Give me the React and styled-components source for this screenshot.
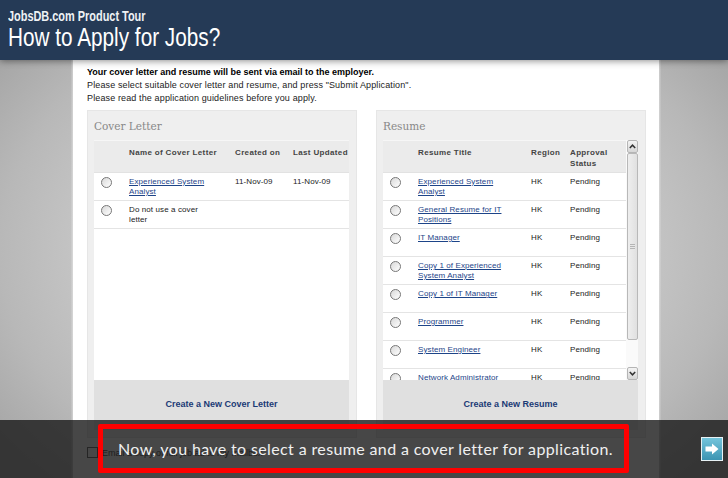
import React from 'react';
import styled, { createGlobalStyle } from 'styled-components';

const GlobalStyle = createGlobalStyle`
  html, body {
    margin: 0;
    padding: 0;
    background: #b5b5b5;
  }
`;

const Stage = styled.div`
  position: relative;
  width: 728px;
  height: 478px;
  overflow: hidden;
  display: flex;
  flex-direction: column;
  font-family: 'Liberation Sans', Arial, sans-serif;
  background: radial-gradient(ellipse 400px 290px at 364px 250px, #c8c8c8 0%, #c5c5c5 70%, #b8b8b8 91%, #a6a6a6 112%, #a0a0a0 130%);
`;

const Header = styled.header`
  flex: none;
  height: 60px;
  box-sizing: border-box;
  padding: 8px 0 0 8px;
  background: #253a56;
  color: #fff;
  position: relative;
  z-index: 1;
  box-shadow: 0 1px 7px rgba(0, 0, 0, 0.45);
`;

const TourName = styled.div`
  font-size: 14px;
  line-height: 16px;
  font-weight: 700;
  color: #eef1f4;
  transform: scaleX(0.78);
  transform-origin: left;
`;

const TourTitle = styled.div`
  font-size: 25px;
  line-height: 27px;
  transform: scaleX(0.83);
  transform-origin: left;
`;

const Page = styled.main`
  flex: 1;
  width: 586px;
  margin-left: 73px;
  box-sizing: border-box;
  padding: 6px 13px 0 14px;
  background: #fff;
  box-shadow: 0 0 0 1.5px rgba(255, 255, 255, 0.3);
`;

const Intro = styled.p`
  margin: 0 0 5px;
  font-size: 9px;
  line-height: 13px;
  color: #222;
  letter-spacing: 0.13px;
  ${(p) => p.$strong && 'font-weight: 700; letter-spacing: 0; color: #000; margin-bottom: 0;'}
  ${(p) => p.$tight && 'margin-bottom: 0;'}
`;

const Panels = styled.div`
  display: flex;
  justify-content: space-between;
`;

const Panel = styled.section`
  width: 270px;
  height: 328px;
  box-sizing: border-box;
  padding: 0 7px 0 6px;
  background: #efefef;
  border: 1px solid #e6e6e6;
  display: flex;
  flex-direction: column;
`;

const PanelTitle = styled.h2`
  margin: 0;
  height: 29px;
  line-height: 30px;
  font-family: 'DejaVu Serif', 'Liberation Serif', serif;
  font-size: 10.5px;
  font-weight: 400;
  color: #888;
  flex: none;
`;

const ListArea = styled.div`
  flex: none;
  height: 240px;
  display: flex;
`;

const Table = styled.div`
  flex: 1;
  min-width: 0;
  overflow: hidden;
  background: #fff;
`;

const HeadRow = styled.div`
  height: 33px;
  box-sizing: border-box;
  padding-top: 7px;
  display: grid;
  grid-template-columns: ${(p) => p.$columns};
  background: #ebebeb;
  border-top: 1px solid #f6f6f6;
  border-bottom: 1px solid #e2e2e2;
`;

const HeadCell = styled.div`
  font-size: 8px;
  line-height: 10.5px;
  font-weight: 700;
  letter-spacing: 0.35px;
  color: #444;
`;

const Row = styled.div`
  height: 28px;
  box-sizing: border-box;
  padding-top: 4px;
  display: grid;
  grid-template-columns: ${(p) => p.$columns};
  border-bottom: 1px solid #e4e4e4;
`;

const Cell = styled.div`
  font-size: 8px;
  line-height: 10px;
  letter-spacing: 0.1px;
  color: #222;
  max-width: ${(p) => p.$max || 'none'};
`;

const ResumeLink = styled.a`
  color: #1d4488;
  text-decoration: underline;
`;

const RadioWrap = styled.div`
  padding-left: 7px;
`;

const Radio = styled.span`
  display: block;
  width: 11px;
  height: 11px;
  box-sizing: border-box;
  border-radius: 50%;
  border: 1px solid #777;
  background: linear-gradient(135deg, #d8d8d8, #fff);
`;

const Scrollbar = styled.div`
  flex: none;
  width: 12px;
  padding-left: 1px;
  box-sizing: border-box;
  display: flex;
  flex-direction: column;
  background: #fafafa;
`;

const ScrollButton = styled.div`
  flex: none;
  height: 13px;
  box-sizing: border-box;
  display: flex;
  align-items: center;
  justify-content: center;
  background: linear-gradient(#f4f4f4, #d6d6d6);
  border: 1px solid #b5b5b5;
  border-radius: 2px;
`;

const ScrollThumb = styled.div`
  flex: none;
  height: 187px;
  box-sizing: border-box;
  display: flex;
  align-items: center;
  justify-content: center;
  background: linear-gradient(90deg, #eee, #e0e0e0);
  border: 1px solid #b8b8b8;
  border-radius: 2px;
`;

const ThumbGrip = styled.div`
  width: 5px;
  height: 6px;
  background: repeating-linear-gradient(#b5b5b5 0 1px, #e8e8e8 1px 2px);
`;

const ScrollGap = styled.div`
  flex: 1;
`;

const PanelFooter = styled.div`
  flex: none;
  height: 50px;
  box-sizing: border-box;
  padding-top: 18px;
  text-align: center;
  font-size: 9px;
  line-height: 12px;
  font-weight: 700;
  color: #1b3a75;
  background: #e0e0e0;
`;

const EmailRow = styled.div`
  display: flex;
  align-items: center;
  gap: 4px;
  margin-top: 9px;
  font-size: 9px;
  color: #333;
`;

const EmailBox = styled.span`
  width: 9px;
  height: 9px;
  border: 1px solid #555;
`;

const Caption = styled.div`
  position: absolute;
  left: 0;
  right: 0;
  bottom: 0;
  z-index: 2;
  height: 58px;
  box-sizing: border-box;
  padding: 4px 5px 5px 98px;
  display: flex;
  align-items: center;
  justify-content: space-between;
  background: rgba(25, 25, 25, 0.8);
`;

const CaptionBox = styled.div`
  width: 531px;
  height: 49px;
  box-sizing: border-box;
  border: 5px solid #f00;
  border-radius: 2px;
  padding-left: 15px;
  display: flex;
  align-items: center;
  color: #f0f0f0;
  font-family: 'Lato', 'Open Sans', sans-serif;
  font-size: 16px;
  letter-spacing: 0.37px;
  white-space: nowrap;
`;

const NextButton = styled.div`
  width: 22px;
  height: 24px;
  box-sizing: border-box;
  display: flex;
  align-items: center;
  justify-content: center;
  border: 1px solid #e8f2f5;
  background: linear-gradient(#74c5dc, #3c94b2);
`;

const coverColumns = '35px 106px 58px 1fr';
const resumeColumns = '35px 113px 39px 1fr';

const coverRows = [
  { title: 'Experienced System Analyst', link: true, created: '11-Nov-09', updated: '11-Nov-09' },
  { title: 'Do not use a cover letter', link: false, created: '', updated: '' },
];

const resumeRows = [
  'Experienced System Analyst',
  'General Resume for IT Positions',
  'IT Manager',
  'Copy 1 of Experienced System Analyst',
  'Copy 1 of IT Manager',
  'Programmer',
  'System Engineer',
  'Network Administrator',
];

const Chevron = ({ down }) => (
  <svg width="7" height="5" viewBox="0 0 7 5">
    <path d={down ? 'M0.8 1 L3.5 3.8 L6.2 1' : 'M0.8 4 L3.5 1.2 L6.2 4'} fill="none" stroke="#333" strokeWidth="1.5" />
  </svg>
);

const App = () => (
  <Stage>
    <GlobalStyle />
    <Header>
      <TourName>JobsDB.com Product Tour</TourName>
      <TourTitle>How to Apply for Jobs?</TourTitle>
    </Header>
    <Page>
      <Intro $strong>Your cover letter and resume will be sent via email to the employer.</Intro>
      <Intro $tight>Please select suitable cover letter and resume, and press "Submit Application".</Intro>
      <Intro>Please read the application guidelines before you apply.</Intro>
      <Panels>
        <Panel>
          <PanelTitle>Cover Letter</PanelTitle>
          <ListArea>
            <Table>
              <HeadRow $columns={coverColumns}>
                <span />
                <HeadCell>Name of Cover Letter</HeadCell>
                <HeadCell>Created on</HeadCell>
                <HeadCell>Last Updated</HeadCell>
              </HeadRow>
              {coverRows.map((row) => (
                <Row key={row.title} $columns={coverColumns}>
                  <RadioWrap><Radio /></RadioWrap>
                  <Cell $max="85px">{row.link ? <ResumeLink>{row.title}</ResumeLink> : row.title}</Cell>
                  <Cell>{row.created}</Cell>
                  <Cell>{row.updated}</Cell>
                </Row>
              ))}
            </Table>
          </ListArea>
          <PanelFooter>Create a New Cover Letter</PanelFooter>
        </Panel>
        <Panel>
          <PanelTitle>Resume</PanelTitle>
          <ListArea>
            <Table>
              <HeadRow $columns={resumeColumns}>
                <span />
                <HeadCell>Resume Title</HeadCell>
                <HeadCell>Region</HeadCell>
                <HeadCell>Approval Status</HeadCell>
              </HeadRow>
              {resumeRows.map((title) => (
                <Row key={title} $columns={resumeColumns}>
                  <RadioWrap><Radio /></RadioWrap>
                  <Cell $max="92px"><ResumeLink>{title}</ResumeLink></Cell>
                  <Cell>HK</Cell>
                  <Cell>Pending</Cell>
                </Row>
              ))}
            </Table>
            <Scrollbar>
              <ScrollButton><Chevron /></ScrollButton>
              <ScrollThumb><ThumbGrip /></ScrollThumb>
              <ScrollGap />
              <ScrollButton><Chevron down /></ScrollButton>
            </Scrollbar>
          </ListArea>
          <PanelFooter>Create a New Resume</PanelFooter>
        </Panel>
      </Panels>
      <EmailRow>
        <EmailBox />
        Email a copy of full job ad to my mailbox
      </EmailRow>
    </Page>
    <Caption>
      <CaptionBox>Now, you have to select a resume and a cover letter for application.</CaptionBox>
      <NextButton>
        <svg width="14" height="12" viewBox="0 0 14 12">
          <path d="M0.5 3.5 H7 V0.5 L13.5 6 L7 11.5 V8.5 H0.5 Z" fill="#fff" />
        </svg>
      </NextButton>
    </Caption>
  </Stage>
);

export default App;
